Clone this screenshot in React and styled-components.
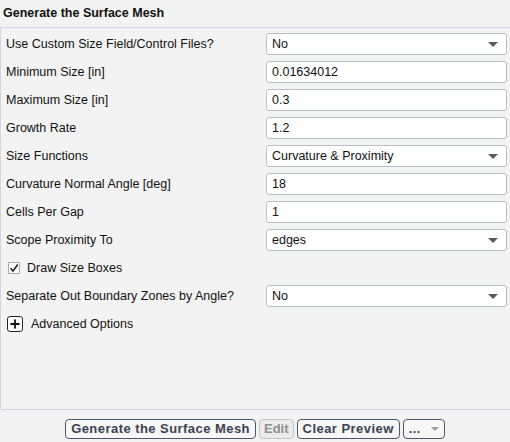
import React from "react";
import styled, { createGlobalStyle } from "styled-components";

const GlobalStyle = createGlobalStyle`
  html, body {
    margin: 0;
    padding: 0;
    background: #f3f3f3;
  }
  body {
    font-family: "Liberation Sans", Arial, sans-serif;
    font-size: 12px;
    color: #111;
  }
`;

const Page = styled.div`
  width: 510px;
  height: 442px;
  display: flex;
  flex-direction: column;
  background: #f3f3f3;
  overflow: hidden;
`;

const Title = styled.div`
  height: 27px;
  display: flex;
  align-items: center;
  padding-left: 3px;
  font-weight: bold;
  font-size: 12.5px;
  color: #111;
  box-sizing: border-box;
  padding-bottom: 1px;
`;

const Panel = styled.div`
  height: 383px;
  box-sizing: border-box;
  border-top: 1px solid #d3d6df;
  border-left: 1px solid #d3d6df;
  border-bottom: 1px solid #d3d6df;
  padding: 2px 3px 0 5px;
  display: flex;
  flex-direction: column;
`;

const Row = styled.div`
  height: 28px;
  display: flex;
  align-items: center;
`;

const Label = styled.div`
  width: 260px;
  flex: none;
  font-size: 12.5px;
`;

const Field = styled.div`
  flex: 1;
  height: 22px;
  box-sizing: border-box;
  background: #fff;
  border: 1px solid #b9bfcc;
  border-radius: 3px;
  display: flex;
  align-items: center;
  padding: 0 6px 0 5px;
  font-size: 12.5px;
`;

const Value = styled.span`
  flex: 1;
`;

const Arrow = styled.span`
  width: 0;
  height: 0;
  border-left: 5px solid transparent;
  border-right: 5px solid transparent;
  border-top: 5px solid #5c5c5c;
  margin-right: 2px;
`;

const CheckRow = styled(Row)`
  gap: 7px;
  padding-left: 2px;
`;

const Box = styled.span`
  width: 12px;
  height: 12px;
  box-sizing: border-box;
  border: 1px solid #a7abb3;
  background: #fff;
  display: flex;
  align-items: center;
  justify-content: center;
`;

const Expander = styled(Row)`
  gap: 8px;
  padding-left: 1px;
`;

const PlusBox = styled.span`
  width: 16px;
  height: 16px;
  box-sizing: border-box;
  border: 1.5px solid #222;
  border-radius: 3px;
  display: flex;
  align-items: center;
  justify-content: center;
  background: #fff;
`;

const Footer = styled.div`
  flex: 1;
  display: flex;
  align-items: center;
  justify-content: center;
  gap: 3px;
  padding-top: 5px;
`;

const Button = styled.div`
  height: 20px;
  box-sizing: border-box;
  border: 1px solid ${(p) => (p.disabled ? "#c3c3c3" : "#4e5666")};
  border-radius: 4px;
  background: ${(p) => (p.disabled ? "#ebebeb" : "#f7f7f7")};
  color: ${(p) => (p.disabled ? "#8f8f8f" : "#3c4150")};
  font-weight: bold;
  font-size: 13px;
  letter-spacing: ${(p) => (p.disabled ? 0 : 0.45)}px;
  padding: 0 ${(p) => (p.disabled ? 4 : 5)}px;
  display: flex;
  align-items: center;
  gap: 8px;
`;

const SmallArrow = styled.span`
  width: 0;
  height: 0;
  border-left: 4px solid transparent;
  border-right: 4px solid transparent;
  border-top: 4px solid #9a9ea8;
  margin-left: 2px;
`;

const rows = [
  { label: "Use Custom Size Field/Control Files?", value: "No", select: true },
  { label: "Minimum Size [in]", value: "0.01634012" },
  { label: "Maximum Size [in]", value: "0.3" },
  { label: "Growth Rate", value: "1.2" },
  { label: "Size Functions", value: "Curvature & Proximity", select: true },
  { label: "Curvature Normal Angle [deg]", value: "18" },
  { label: "Cells Per Gap", value: "1" },
  { label: "Scope Proximity To", value: "edges", select: true },
];

const FieldRow = ({ label, value, select }) => (
  <Row>
    <Label>{label}</Label>
    <Field>
      <Value>{value}</Value>
      {select && <Arrow />}
    </Field>
  </Row>
);

export default function App() {
  return (
    <Page>
      <GlobalStyle />
      <Title>Generate the Surface Mesh</Title>
      <Panel>
        {rows.map((r) => (
          <FieldRow key={r.label} {...r} />
        ))}
        <CheckRow>
          <Box>
            <svg width="10" height="10" viewBox="0 0 10 10">
              <path d="M1.5 5.2 L4 8 L8.8 1.5" fill="none" stroke="#222" strokeWidth="1.6" />
            </svg>
          </Box>
          <Label>Draw Size Boxes</Label>
        </CheckRow>
        <FieldRow label="Separate Out Boundary Zones by Angle?" value="No" select />
        <Expander>
          <PlusBox>
            <svg width="10" height="10" viewBox="0 0 10 10">
              <path d="M5 0.5 V9.5 M0.5 5 H9.5" stroke="#111" strokeWidth="1.8" />
            </svg>
          </PlusBox>
          <Label>Advanced Options</Label>
        </Expander>
      </Panel>
      <Footer>
        <Button>Generate the Surface Mesh</Button>
        <Button disabled>Edit</Button>
        <Button>Clear Preview</Button>
        <Button>
          <span>...</span>
          <SmallArrow />
        </Button>
      </Footer>
    </Page>
  );
}
